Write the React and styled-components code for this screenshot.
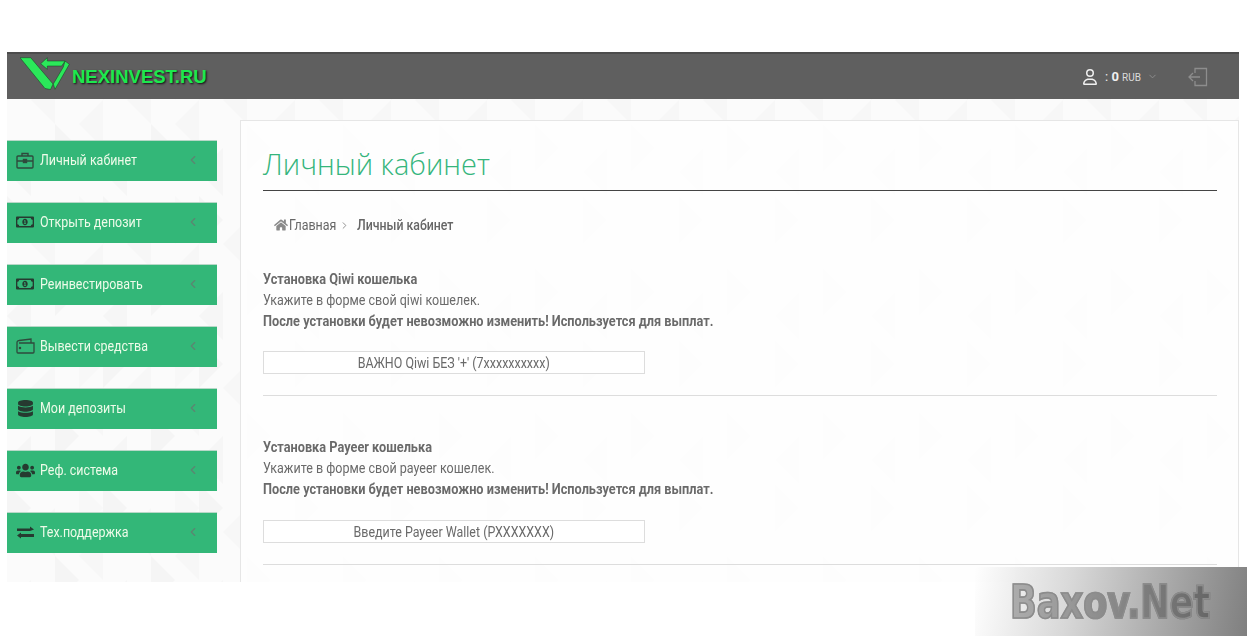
import React from "react";
import styled, { createGlobalStyle } from "styled-components";
import { FaDatabase, FaHome, FaRegMoneyBillAlt, FaUsers } from "react-icons/fa";
import { FaRegUser } from "react-icons/fa6";
import { ChevronDown, ChevronLeft, ChevronRight } from "lucide-react";

const GlobalStyle = createGlobalStyle`
  html, body { margin: 0; padding: 0; background: #fff; }
  body { font-family: "Roboto", "Liberation Sans", sans-serif; overflow: hidden; }
  * { box-sizing: border-box; }
`;

// background tile: sideways triangles in four 24px columns
const tile = (alpha) => {
  const t = (d, a) => `<path d='${d}' fill='%23000' fill-opacity='${a}'/>`;
  const shapes =
    t("M0 0v48l24-24z", alpha) +
    t("M48 24v48l-24-24z", alpha * 0.6) +
    t("M48 72v48l24-24z", alpha) +
    t("M96 48v48l-24-24z", alpha * 0.7) +
    t("M72 0v48l24-24z", alpha * 0.5) +
    t("M24 96v48l-24-24z", alpha * 0.8);
  return `url("data:image/svg+xml,<svg xmlns='http://www.w3.org/2000/svg' width='96' height='144'>${shapes}</svg>")`;
};

const BriefcaseIcon = () => (
  <svg width="18" height="17" viewBox="0 0 18 17" fill="none" stroke="#2f4a3c" strokeWidth="1.4">
    <rect x="1" y="4" width="16" height="12" rx="1" />
    <path d="M6 4V1.5h6V4M1 9h16" />
    <rect x="7.5" y="7.5" width="3" height="3" fill="#2f4a3c" />
  </svg>
);

const WalletIcon = () => (
  <svg width="19" height="16" viewBox="0 0 19 16" fill="none" stroke="#2f4a3c" strokeWidth="1.3">
    <path d="M1 4.5V14a1 1 0 0 0 1 1h15a1 1 0 0 0 1-1V5H3M1 4.5A2 2 0 0 1 3 2.5L15 1v4" />
    <circle cx="4" cy="10" r=".6" fill="#2f4a3c" />
  </svg>
);

const SwapIcon = () => (
  <svg width="17" height="13" viewBox="0 0 17 13" fill="#263a30">
    <path d="M0 2.5h13V.5l4 3-4 1.5H0z" />
    <path d="M17 8H4V6.5l-4 3 4 3V11h13z" />
  </svg>
);

const LogoutIcon = () => (
  <svg width="20" height="20" viewBox="0 0 20 20" fill="none" stroke="#8d8d8d" strokeWidth="1.3">
    <path d="M7 6V1.5h11.5v17H7V14M12 10H1M5 6l-4 4 4 4" />
  </svg>
);

const LogoMark = () => (
  <svg width="52" height="36" viewBox="0 0 52 36" fill="#2be85a" stroke="#123d1f" strokeWidth=".5">
    <path d="M0 1.7h10.7L33 28l-2.5 5.5L25 32.5z" />
    <path d="M45 5l4.3 3.3L35 33.3 33.3 28l10-17z" />
    <path d="M20.7 7.7l6.6-6v3.3H45l-3.3 5H27.3v3.3z" />
  </svg>
);

const MENU = [
  { label: "Личный кабинет", icon: <BriefcaseIcon /> },
  { label: "Открыть депозит", icon: <FaRegMoneyBillAlt size={18} /> },
  { label: "Реинвестировать", icon: <FaRegMoneyBillAlt size={18} /> },
  { label: "Вывести средства", icon: <WalletIcon /> },
  { label: "Мои депозиты", icon: <FaDatabase size={17} /> },
  { label: "Реф. система", icon: <FaUsers size={19} /> },
  { label: "Тех.поддержка", icon: <SwapIcon /> },
];

const FORMS = [
  { name: "Qiwi", lower: "qiwi", placeholder: "ВАЖНО Qiwi БЕЗ '+' (7xxxxxxxxxx)" },
  { name: "Payeer", lower: "payeer", placeholder: "Введите Payeer Wallet (PXXXXXXX)" },
];

export default function App() {
  return (
    <>
      <GlobalStyle />
      <Page>
        <Frame>
          <Header>
            <Logo>
              <LogoMark />
              <LogoText>NEXINVEST.RU</LogoText>
            </Logo>
            <HeaderRight>
              <FaRegUser size={16} color="#f0f0f0" />
              <Balance>
                : <b>0</b> <small>RUB</small>
              </Balance>
              <ChevronDown size={11} color="#8f8f8f" />
              <LogoutLink>
                <LogoutIcon />
              </LogoutLink>
            </HeaderRight>
          </Header>
          <Body>
            <Sidebar>
              {MENU.map((item) => (
                <MenuItem key={item.label}>
                  <MenuIcon>{item.icon}</MenuIcon>
                  <MenuLabel>{item.label}</MenuLabel>
                  <ChevronLeft size={14} color="#5d8471" />
                </MenuItem>
              ))}
            </Sidebar>
            <Content>
              <Title>Личный кабинет</Title>
              <Breadcrumbs>
                <FaHome size={14} color="#8a8a8a" />
                <Crumb>Главная</Crumb>
                <ChevronRight size={11} color="#8a8a8a" />
                <CurrentCrumb>Личный кабинет</CurrentCrumb>
              </Breadcrumbs>
              {FORMS.map((form) => (
                <Section key={form.name}>
                  <Strong>Установка {form.name} кошелька</Strong>
                  <Line>Укажите в форме свой {form.lower} кошелек.</Line>
                  <Strong>После установки будет невозможно изменить! Используется для выплат.</Strong>
                  <WalletField>
                    <FieldText>{form.placeholder}</FieldText>
                  </WalletField>
                </Section>
              ))}
            </Content>
          </Body>
        </Frame>
        <Watermark>
          <WatermarkText>Baxov.Net</WatermarkText>
        </Watermark>
      </Page>
    </>
  );
}

const Page = styled.div`
  position: relative;
  width: 1247px;
  height: 636px;
  padding: 52px 8px 54px 7px;
  overflow: hidden;
`;

const Frame = styled.div`
  height: 530px;
  display: flex;
  flex-direction: column;
  overflow: hidden;
  background-color: #fbfbfb;
  background-image: ${tile(0.025)};
`;

const Header = styled.header`
  flex: none;
  height: 47px;
  display: flex;
  align-items: center;
  justify-content: space-between;
  padding: 0 31px 0 13px;
  background: #5f5f5f;
  border-top: 2px solid #4c4c4c;
`;

const Logo = styled.div`
  display: flex;
  align-items: center;
  margin-top: -6px;
`;

const LogoText = styled.span`
  margin-top: 6px;
  font: bold 18.5px "Liberation Sans", sans-serif;
  color: #1ce84e;
  text-shadow: 1px 1px 2px #111;
`;

const HeaderRight = styled.div`
  display: flex;
  align-items: center;
  color: #f0f0f0;
`;

const Balance = styled.span`
  margin: 0 6px 0 7px;
  font-size: 13px;
  white-space: pre;
  b { font-weight: 700; font-size: 13px; }
  small { font-size: 10px; color: #dcdcdc; }
`;

const LogoutLink = styled.span`
  display: flex;
  margin-left: 30px;
`;

const Body = styled.div`
  flex: 1;
  display: flex;
  min-height: 0;
  padding-top: 21px;
`;

const Sidebar = styled.nav`
  flex: none;
  width: 233px;
  padding-top: 20px;
  display: flex;
  flex-direction: column;
  gap: 21px;
`;

const MenuItem = styled.a`
  width: 210px;
  height: 41px;
  display: flex;
  align-items: center;
  padding: 0 17px 2px 3px;
  background: #33b778;
  border-top: 1px solid #b9d8c8;
  color: #eefbe9;
`;

const MenuIcon = styled.span`
  width: 30px;
  display: flex;
  justify-content: center;
  color: #263a30;
`;

const MenuLabel = styled.span`
  flex: 1;
  font-size: 15px;
  white-space: nowrap;
  transform: scaleX(0.83);
  transform-origin: left center;
`;

const Content = styled.main`
  flex: 1;
  padding: 0 21px 0 22px;
  background-color: rgba(255, 255, 255, 0.8);
  border: 1px solid #e6e6e6;
  border-bottom: none;
`;

const Title = styled.h1`
  margin: 20px 0 0;
  height: 50px;
  font: 300 29px "Open Sans", sans-serif;
  line-height: 46px;
  color: #35b57c;
  border-bottom: 1px solid #444;
`;

const Breadcrumbs = styled.div`
  display: flex;
  align-items: center;
  height: 20px;
  margin: 24px 0 0 11px;
  font-size: 15px;
  color: #666;
`;

const Crumb = styled.span`
  width: 47px;
  margin: 0 3px 0 1px;
  white-space: nowrap;
  transform: scaleX(0.83);
  transform-origin: left center;
`;

const CurrentCrumb = styled.span`
  margin-left: 7px;
  font-weight: 500;
  white-space: nowrap;
  transform: scaleX(0.82);
  transform-origin: left center;
`;

const WalletField = styled.div`
  display: flex;
  align-items: center;
  justify-content: center;
  width: 382px;
  height: 23px;
  margin-top: 19px;
  padding-top: 1px;
  background: #fff;
  border: 1px solid #ddd;
`;

const Section = styled.section`
  margin-top: 34px;
  padding-bottom: 21px;
  border-bottom: 1px solid #ddd;
  color: #6a6a6a;
  font-size: 15px;
  line-height: 21px;

  & + & {
    margin-top: 41px;
  }

  & + & ${WalletField} {
    margin-top: 20px;
  }
`;

const Strong = styled.div`
  font-weight: 700;
  white-space: nowrap;
  transform: scaleX(0.85);
  transform-origin: left center;
`;

const Line = styled.div`
  white-space: nowrap;
  transform: scaleX(0.835);
  transform-origin: left center;
`;

const FieldText = styled.span`
  white-space: nowrap;
  transform: scaleX(0.83);
`;

const Watermark = styled.div`
  position: absolute;
  right: 0;
  bottom: 0;
  width: 272px;
  height: 69px;
  display: flex;
  align-items: center;
  background: linear-gradient(100deg, rgba(255, 255, 255, 0) 0%, #d8d8d8 35%, #7f7f7f 100%);
`;

const WatermarkText = styled.span`
  margin-left: 35px;
  font: bold 42px "DejaVu Sans Condensed", "DejaVu Sans", sans-serif;
  display: inline-block;
  transform: scale(0.93, 1.12);
  transform-origin: left center;
  background: linear-gradient(90deg, #adadad, #666);
  -webkit-background-clip: text;
  background-clip: text;
  color: transparent;
  -webkit-text-stroke: 1.5px #8c8c8c;
`;
